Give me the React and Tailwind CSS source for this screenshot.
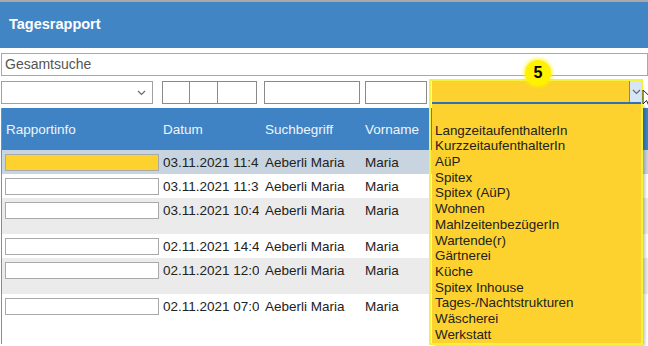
import React from "react";

const rows = [
  { bg: "bg-[#c8d4df]", h: "h-[24px]", date: "03.11.2021 11:46", yellow: true },
  { bg: "bg-white", h: "h-[24px]", date: "03.11.2021 11:39" },
  { bg: "bg-[#ebebeb]", h: "h-[36px]", date: "03.11.2021 10:41" },
  { bg: "bg-white", h: "h-[24px]", date: "02.11.2021 14:47" },
  { bg: "bg-[#ebebeb]", h: "h-[36px]", date: "02.11.2021 12:05" },
  { bg: "bg-white", h: "h-[50px]", date: "02.11.2021 07:02" },
];

const options = [
  "",
  "LangzeitaufenthalterIn",
  "KurzzeitaufenthalterIn",
  "AüP",
  "Spitex",
  "Spitex (AüP)",
  "Wohnen",
  "MahlzeitenbezügerIn",
  "Wartende(r)",
  "Gärtnerei",
  "Küche",
  "Spitex Inhouse",
  "Tages-/Nachtstrukturen",
  "Wäscherei",
  "Werkstatt",
];

function Chevron({ className }) {
  return (
    <svg width="9" height="6" viewBox="0 0 9 6" className={className}>
      <polyline points="1,1 4.5,4.5 8,1" fill="none" stroke="#666" strokeWidth="1.1" />
    </svg>
  );
}

export default function App() {
  return (
    <div className="w-[648px] h-[346px] overflow-hidden bg-white relative font-['Liberation_Sans',Arial,sans-serif] text-[13.5px] text-[#222]">
      {/* title bar */}
      <div className="h-[2px] bg-[#a9a9a9]" />
      <div className="h-[46px] bg-[#4185c5] flex items-center pl-[9px]">
        <span className="text-white font-bold text-[14.5px]">Tagesrapport</span>
      </div>

      {/* global search */}
      <div className="mt-[5px] ml-[1px] h-[23px] border border-[#a8a8a8] flex items-center pl-[3px] text-[14px] text-[#555]">
        Gesamtsuche
      </div>

      {/* filter row */}
      <div className="mt-[5px] h-[23px] flex items-stretch relative z-20">
        <div className="ml-[1px] w-[152px] border border-[#a0a0a0] flex items-center justify-end pr-[6px]">
          <Chevron />
        </div>
        <div className="ml-[9px] w-[28px] border border-[#8a8a8a]" />
        <div className="-ml-px w-[29px] border border-[#8a8a8a]" />
        <div className="-ml-px w-[40px] border border-[#8a8a8a]" />
        <div className="ml-[7px] w-[96px] border border-[#8a8a8a]" />
        <div className="ml-[5px] w-[62px] border border-[#8a8a8a]" />

        {/* highlighted dropdown */}
        <div className="ml-[5px] w-[211px] relative">
          <div className="h-full flex bg-[#fdd12e] border-b-2 border-[#2f72b6]">
            <div className="flex-1" />
            <div className="w-[14px] bg-[#d6e6f5] border-l border-[#5b8fc4] flex items-center justify-center">
              <Chevron />
            </div>
          </div>
          <div className="absolute left-0 top-full w-[211px] h-[240px] bg-[#fdd12e] pt-[3px] pl-[3px] leading-[15.7px] text-[13.4px] text-[#222] shadow-[2px_2px_3px_rgba(0,0,0,0.25)]">
            {options.map((o, i) => (
              <div key={i} className="h-[15.7px] whitespace-nowrap">
                {o}
              </div>
            ))}
          </div>
          <div className="absolute -left-[3px] -top-[2px] w-[214px] h-[266px] border-2 border-[#f4f23a] pointer-events-none" />
          {/* badge */}
          <div className="absolute left-[93px] -top-[21px] w-[26px] h-[26px] rounded-full bg-[#fff200] shadow-[0_0_3px_2px_rgba(255,242,0,0.55)] flex items-center justify-center font-bold text-[16px] text-black">
            5
          </div>
          {/* mouse cursor */}
          <svg width="12" height="18" viewBox="0 0 12 18" className="absolute left-[210px] top-[8px]">
            <path d="M1 1 L1 15 L4.5 11.5 L7 17 L9 16 L6.5 10.5 L11 10.5 Z" fill="white" stroke="#222" strokeWidth="1" />
          </svg>
        </div>
      </div>

      {/* table */}
      <div className="mt-[4px] ml-[1px] border-l border-[#8c8c8c] relative z-0">
        <div className="h-[42px] bg-[#3f83c4] flex items-center pt-[2px] text-[#f0f4fa]">
          <div className="w-[160px] pl-[4px]">Rapportinfo</div>
          <div className="w-[97px] pl-[1px]">Datum</div>
          <div className="w-[102px] pl-[6px]">Suchbegriff</div>
          <div className="pl-[4px]">Vorname</div>
        </div>
        {rows.map((r, i) => (
          <div key={i} className={`${r.h} ${r.bg} flex items-start pt-[4px]`}>
            <div className="w-[160px] pl-[3px]">
              <div
                className={`w-[154px] h-[17px] border border-[#a9a9a9] ${
                  r.yellow ? "bg-[#fdd12e]" : "bg-white"
                }`}
              />
            </div>
            <div className="w-[97px] pl-[1px] overflow-hidden whitespace-nowrap leading-[17px]">{r.date}</div>
            <div className="w-[102px] pl-[6px] whitespace-nowrap leading-[17px]">Aeberli Maria</div>
            <div className="pl-[4px] whitespace-nowrap leading-[17px]">Maria</div>
          </div>
        ))}
      </div>
    </div>
  );
}
